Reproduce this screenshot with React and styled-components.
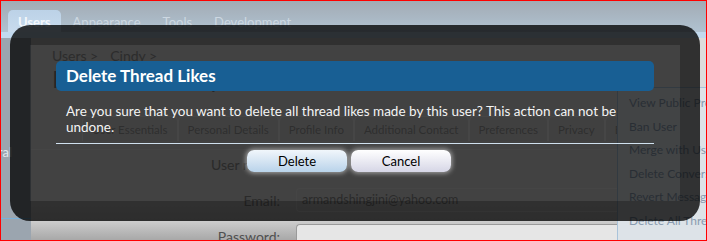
import React from 'react';
import styled, { createGlobalStyle } from 'styled-components';

const GlobalStyle = createGlobalStyle`
  html, body {
    margin: 0;
    padding: 0;
    background: #ffffff;
  }
  body {
    font-family: Lato, 'Liberation Sans', sans-serif;
  }
`;

// PAGE BEHIND THE OVERLAY
const Frame = styled.div`
  position: relative;
  width: 707px;
  height: 241px;
  box-sizing: border-box;
  border: 1px solid #ff0000;
  overflow: hidden;
  display: flex;
  flex-direction: column;
  font-family: Lato, 'Liberation Sans', sans-serif;
  font-size: 13px;
`;

const Header = styled.div`
  height: 31px;
  flex: none;
  display: flex;
  align-items: flex-end;
  gap: 2px;
  padding-left: 7px;
  background: linear-gradient(#a2abb4, #b0c2d1);
`;

const Tab = styled.div`
  height: 22px;
  box-sizing: border-box;
  padding: 3px 10px 0 10px;
  line-height: 19px;
  font-weight: ${(p) => (p.active ? 700 : 400)};
  color: ${(p) => (p.active ? '#f4f8fc' : '#cdd8e2')};
  background: ${(p) =>
    p.active ? 'linear-gradient(#bcd2e7, #c8dbed)' : 'transparent'};
  border-radius: 5px 5px 0 0;
`;

const SubNav = styled.div`
  height: 6px;
  flex: none;
  background: #c2d9ee;
`;

const Main = styled.div`
  flex: 1;
  display: flex;
  min-height: 0;
  background: linear-gradient(
    #dcdcdc 0,
    #dcdcdc 163px,
    #cdcdcd 183px,
    #a8a8a8 100%
  );
`;

const LeftNav = styled.div`
  width: 30px;
  flex: none;
  overflow: hidden;
  background: #9ba5af;
  padding-top: 106px;
`;

const NavItem = styled.div`
  display: flex;
  justify-content: flex-end;
  white-space: nowrap;
  padding-right: 19px;
  line-height: 16px;
  color: #e2e8ee;
  padding-bottom: 58px;
  border-bottom: 1px solid #79b1da;
`;

const Content = styled.div`
  flex: 1;
  min-width: 0;
  padding: 10px 0 0 21px;
  color: #949494;
`;

const Crumbs = styled.div`
  display: flex;
  gap: 12px;
  font-size: 14px;
  line-height: 16px;
`;

const Heading = styled.h1`
  margin: 0;
  font-size: 24px;
  line-height: 30px;
  font-weight: 400;
  color: #808080;
`;

const TabBar = styled.div`
  display: flex;
  margin: 22px 0 0 30px;
  height: 25px;
  white-space: nowrap;
`;

const PageTab = styled.div`
  padding: 0 9px;
  font-size: 11.5px;
  line-height: 25px;
  border: 1px solid #ececec;
  border-bottom: none;
  border-radius: 5px 5px 0 0;
  color: #9c9c9c;
  background: #d8d8d8;
`;

const Form = styled.div`
  margin: 8px 0 0 -21px;
  border-top: 1px solid #e6e6e6;
  padding-top: 2px;
`;

const Row = styled.div`
  display: grid;
  grid-template-columns: 249px 1fr;
  column-gap: 16px;
  align-items: center;
  height: 24px;
  margin-bottom: 12px;
`;

const Label = styled.div`
  text-align: right;
  font-size: 14px;
  color: ${(p) => (p.below ? '#505050' : '#8c8c8c')};
`;

const Field = styled.div`
  height: 24px;
  box-sizing: border-box;
  border: 1px solid ${(p) => (p.below ? '#9a9a9a' : '#e8e8e8')};
  border-right: none;
  border-radius: 4px 0 0 4px;
  background: ${(p) => (p.below ? '#e6e6e6' : 'transparent')};
  padding-left: 5px;
  line-height: 22px;
  font-size: 12.5px;
  color: #8e8e8e;
  visibility: ${(p) => (p.hidden ? 'hidden' : 'visible')};
`;

const SideBar = styled.div`
  width: 88px;
  flex: none;
  margin-top: 49px;
  border-top: 1px solid #a9c3da;
  border-left: 1px solid #a9c3da;
  background: #dde3e8;
  padding-top: 3px;
  overflow: hidden;
`;

const SideLink = styled.div`
  padding-left: 11px;
  font-size: 12px;
  line-height: 23.6px;
  white-space: nowrap;
  color: #8a9cb0;
`;

// THE OVERLAY
const Overlay = styled.div`
  position: absolute;
  left: 9px;
  top: 24px;
  width: 690px;
  height: 196px;
  box-sizing: border-box;
  border: 20px solid rgba(0, 0, 0, 0.78);
  border-radius: 20px;
  background: rgba(0, 0, 0, 0.7);
  background-clip: padding-box;
  padding: 16px 26px 0 26px;
`;

const TitleBar = styled.h2`
  margin: 0;
  height: 30px;
  padding: 0 10px;
  border-radius: 5px;
  background: #185f94;
  color: #ffffff;
  font-size: 17px;
  font-weight: 700;
  line-height: 30px;
`;

const Message = styled.p`
  margin: 12px 0 0 0;
  padding: 0 10px;
  font-size: 13.5px;
  line-height: 16px;
  color: #f4f4f4;
`;

const Rule = styled.div`
  margin-top: 8px;
  height: 1px;
  background: #d0e1ef;
`;

const Buttons = styled.div`
  display: flex;
  gap: 4px;
  margin-top: 6px;
  padding-left: 191px;
`;

const Button = styled.button`
  width: 100px;
  height: 22px;
  border: none;
  border-radius: 7px;
  padding: 0;
  font-family: Lato, 'Liberation Sans', sans-serif;
  font-size: 13px;
  color: #000000;
  background: ${(p) =>
    p.primary
      ? 'linear-gradient(#f1f6fb, #b9d3ea)'
      : 'linear-gradient(#ffffff, #d6d6e6)'};
  box-shadow: 0 0 5px 1px rgba(255, 255, 255, 0.55);
`;

const sideLinks = [
  'View Public Profile',
  'Ban User',
  'Merge with User',
  'Delete Conversations',
  'Revert Message Edits',
  'Delete All Thread Likes',
];

const pageTabs = [
  'User Essentials',
  'Personal Details',
  'Profile Info',
  'Additional Contact',
  'Preferences',
  'Privacy',
  'Extra',
];

export default function App() {
  return (
    <>
      <GlobalStyle />
      <Frame>
        <Header>
          <Tab active>Users</Tab>
          <Tab>Appearance</Tab>
          <Tab>Tools</Tab>
          <Tab>Development</Tab>
        </Header>
        <SubNav />
        <Main>
          <LeftNav>
            <NavItem>General</NavItem>
          </LeftNav>
          <Content>
            <Crumbs>
              <span>Users &gt;</span>
              <span>Cindy &gt;</span>
            </Crumbs>
            <Heading>Edit User: Cindy</Heading>
            <TabBar>
              {pageTabs.map((t) => (
                <PageTab key={t}>{t}</PageTab>
              ))}
            </TabBar>
            <Form>
              <Row>
                <Label>User name:</Label>
                <Field hidden />
              </Row>
              <Row>
                <Label>Email:</Label>
                <Field>armandshingjini@yahoo.com</Field>
              </Row>
              <Row>
                <Label below>Password:</Label>
                <Field below />
              </Row>
            </Form>
          </Content>
          <SideBar>
            {sideLinks.map((l) => (
              <SideLink key={l}>{l}</SideLink>
            ))}
          </SideBar>
        </Main>

        <Overlay>
          <TitleBar>Delete Thread Likes</TitleBar>
          <Message>
            Are you sure that you want to delete all thread likes made by this
            user? This action can not be undone.
          </Message>
          <Rule />
          <Buttons>
            <Button primary>Delete</Button>
            <Button>Cancel</Button>
          </Buttons>
        </Overlay>
      </Frame>
    </>
  );
}
